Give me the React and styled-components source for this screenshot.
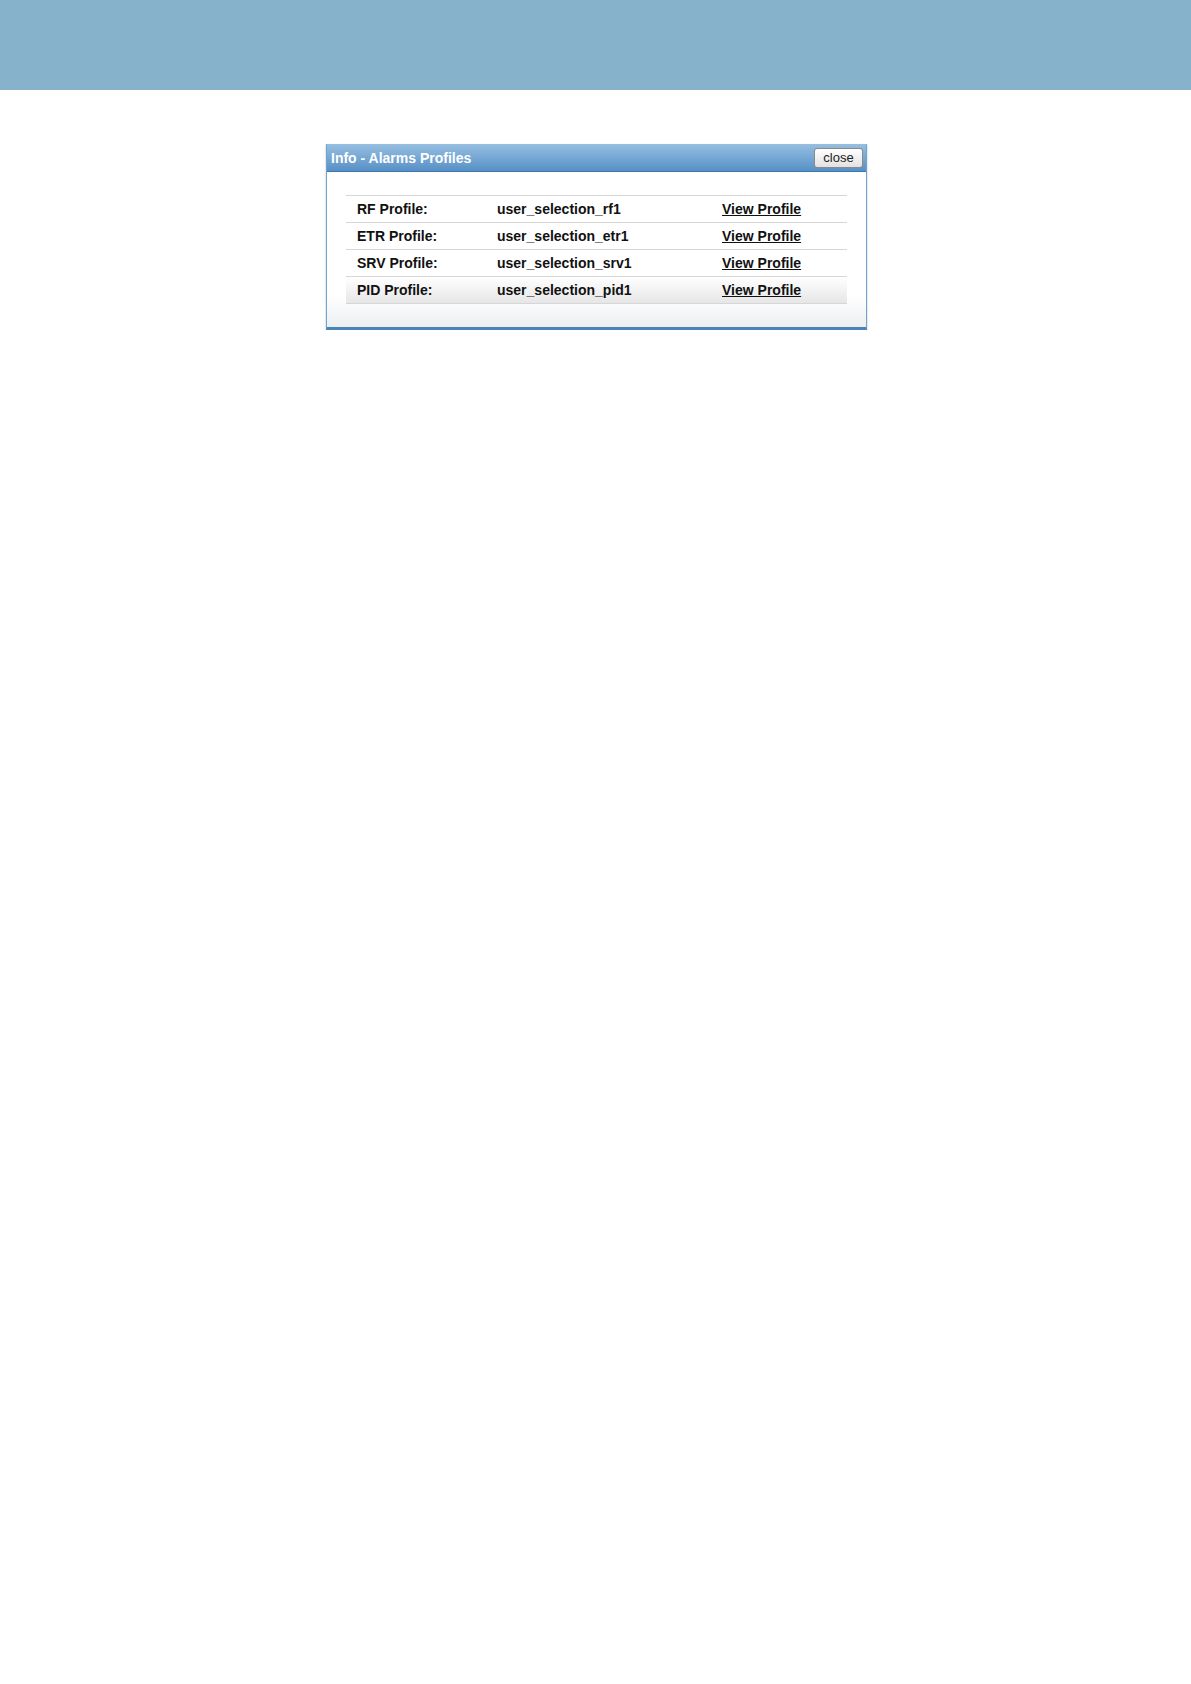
import React from "react";
import styled, { createGlobalStyle } from "styled-components";

const Global = createGlobalStyle`
  html, body { margin: 0; padding: 0; background: #ffffff; }
  body { font-family: "Liberation Sans", Arial, sans-serif; }
`;

const Header = styled.div`
  height: 90px;
  background: #86b3cb;
`;

const Dialog = styled.div`
  margin: 54px 0 0 326px;
  width: 539px;
  border: 1px solid #6fa5d2;
  border-top: none;
  border-bottom: 3px solid #4a84b6;
  box-shadow: 0 1px 2px rgba(0,0,0,0.25);
  background: #fff;
`;

const TitleBar = styled.div`
  height: 27px;
  display: flex;
  align-items: center;
  justify-content: space-between;
  padding: 0 3px 0 4px;
  background: linear-gradient(#97bfe0 0%, #7aaad6 45%, #5790c6 100%);
  border-bottom: 1px solid #3f76a8;
`;

const Title = styled.span`
  color: #ffffff;
  font-weight: bold;
  font-size: 14px;
`;

const CloseButton = styled.button`
  height: 20px;
  width: 49px;
  padding: 0;
  font-family: "Liberation Sans", Arial, sans-serif;
  font-size: 13px;
  color: #222;
  border: 1px solid #8a8a8a;
  border-radius: 3px;
  background: linear-gradient(#ffffff, #e2e2e2);
`;

const Body = styled.div`
  padding: 23px 19px 0 19px;
  background: linear-gradient(#ffffff 0%, #ffffff 80%, #eceef0 100%);
`;

const Table = styled.div`
  display: flex;
  flex-direction: column;
  border-bottom: 1px solid #d6d6d6;
`;

const Row = styled.div`
  display: grid;
  grid-template-columns: 140px 225px 1fr;
  align-items: center;
  height: 26px;
  padding-left: 11px;
  border-top: 1px solid #d6d6d6;
  background: ${(p) => (p.$last ? "linear-gradient(#ffffff, #e6e6e6)" : "transparent")};
  font-size: 14px;
  font-weight: bold;
  color: #111;
`;

const Link = styled.a`
  color: #111;
  text-decoration: underline;
  cursor: pointer;
`;

const Footer = styled.div`
  height: 23px;
`;

const rows = [
  ["RF Profile:", "user_selection_rf1"],
  ["ETR Profile:", "user_selection_etr1"],
  ["SRV Profile:", "user_selection_srv1"],
  ["PID Profile:", "user_selection_pid1"],
];

export default function App() {
  return (
    <>
      <Global />
      <Header />
      <Dialog>
        <TitleBar>
          <Title>Info - Alarms Profiles</Title>
          <CloseButton>close</CloseButton>
        </TitleBar>
        <Body>
          <Table>
            {rows.map(([label, value], i) => (
              <Row key={label} $last={i === rows.length - 1}>
                <span>{label}</span>
                <span>{value}</span>
                <Link>View Profile</Link>
              </Row>
            ))}
          </Table>
          <Footer />
        </Body>
      </Dialog>
    </>
  );
}
